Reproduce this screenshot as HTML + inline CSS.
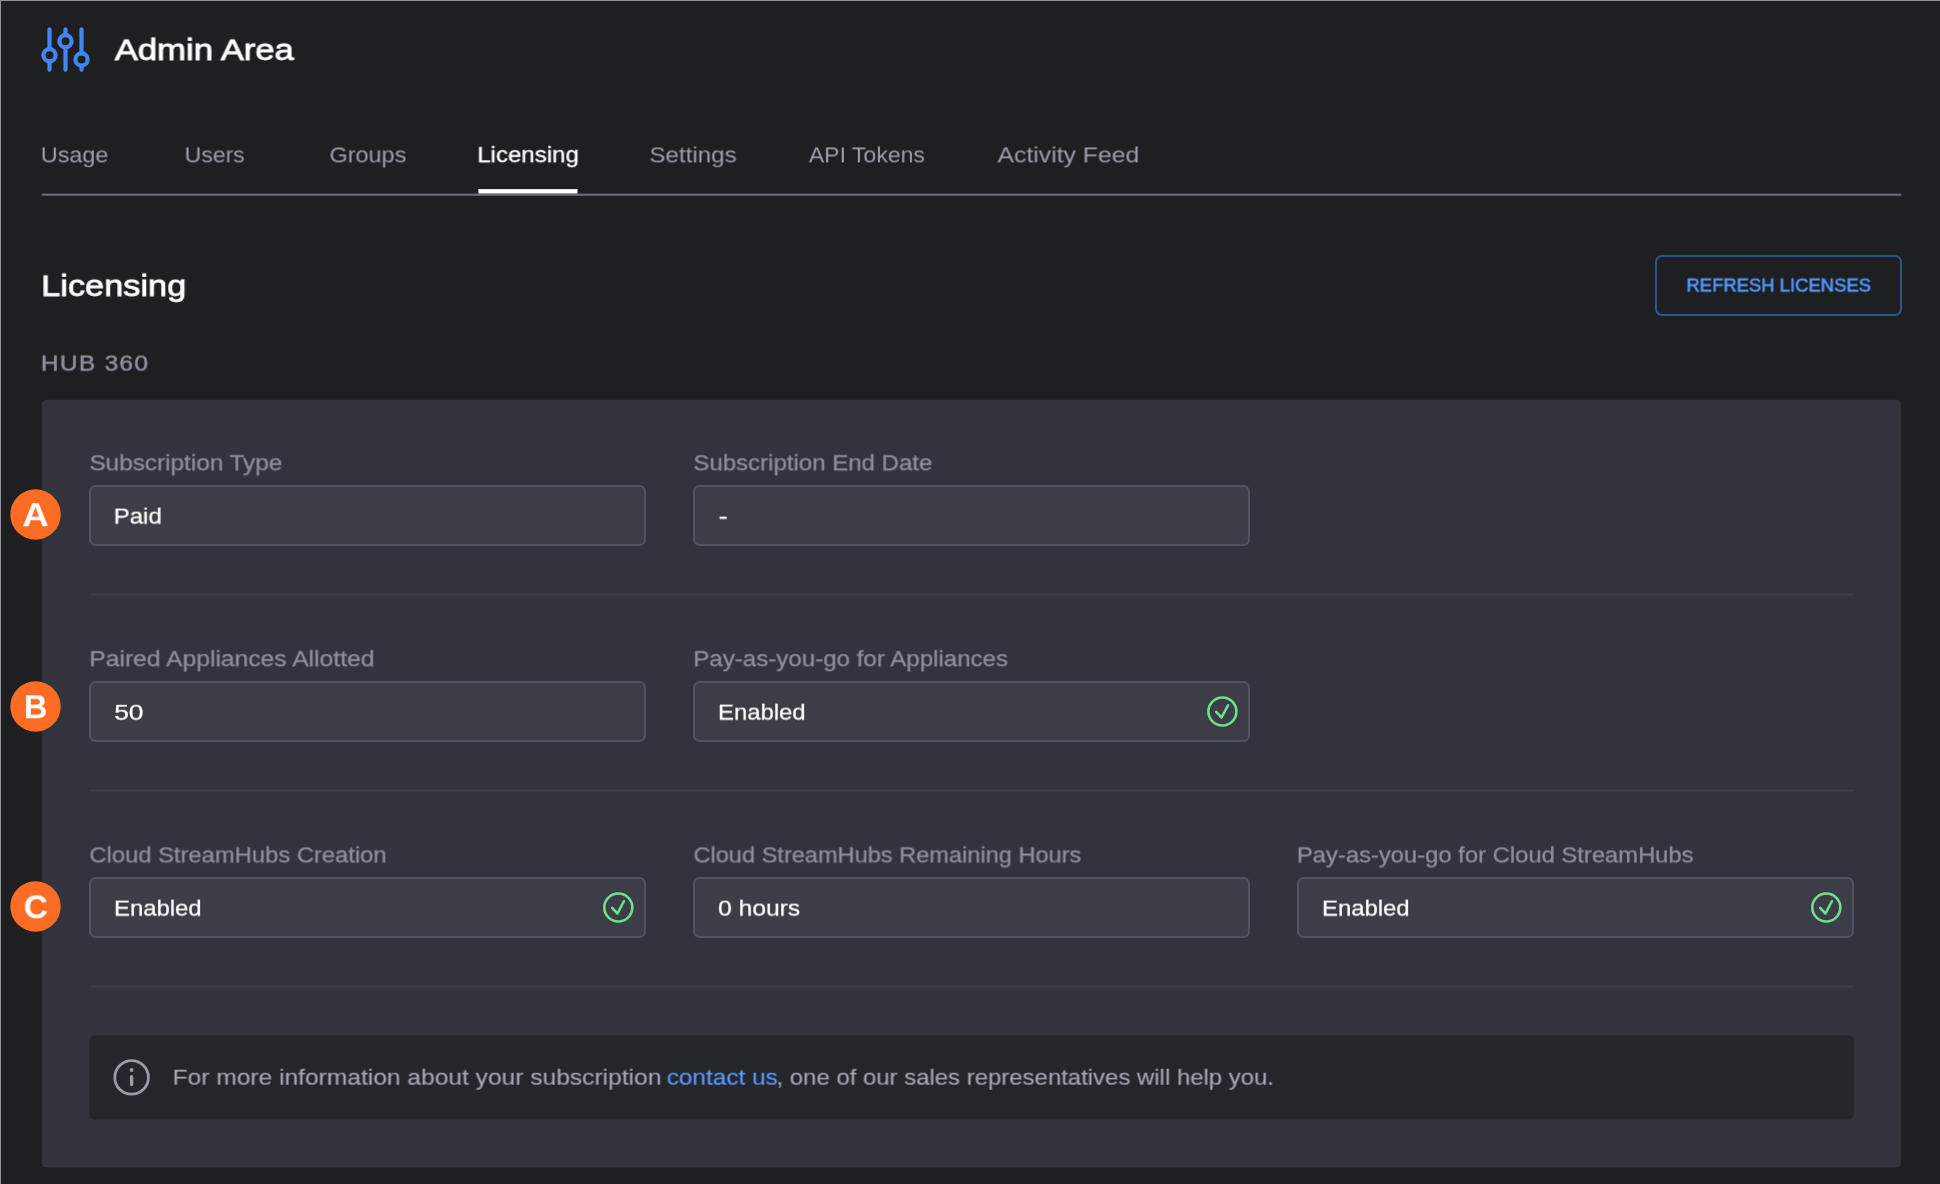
<!DOCTYPE html>
<html lang="en">
<head>
<meta charset="utf-8">
<title>Admin Area - Licensing</title>
<style>
html,body{margin:0;padding:0}
body{width:1940px;height:1184px;background:#1e1f21;position:relative;overflow:hidden;font-family:'Liberation Sans', sans-serif;}
.t{position:absolute;line-height:1;white-space:nowrap;transform-origin:0 0;display:block;text-decoration:none;font-weight:normal}
.t a{color:inherit;text-decoration:none}
p,h1,h2,h3,nav,header,main,section{margin:0;padding:0;font-weight:normal;font-size:inherit;display:block}
.abs{position:absolute}
.edge-t{left:0;top:0;width:1940px;height:1px;background:#929292}
.edge-l{left:0;top:0;width:1px;height:1184px;background:#929292}
.btn{left:1655px;top:255px;width:247px;height:61px;box-sizing:border-box;border:2px solid #2f558e;border-radius:7px;background:transparent;padding:0;margin:0;font:inherit;color:inherit;cursor:pointer;overflow:visible}
.inp{position:absolute;width:557px;height:61px;box-sizing:border-box;border:2px solid #525362;border-radius:6.5px;background:#3d3d48}
.chk{position:absolute}
</style>
</head>
<body>
<!-- background shapes: tab rule + active indicator, card, row dividers, info banner -->
<svg class="abs" style="left:0;top:0" width="1940" height="1184" viewBox="0 0 1940 1184" aria-hidden="true">
<rect x="41.8" y="193.6" width="1859.5" height="2.2" fill="#6a6a7c"/>
<rect x="478.4" y="189.1" width="99.1" height="4.4" fill="#ffffff"/>
<rect x="41.7" y="399.7" width="1859.5" height="767.9" rx="5" fill="#33333d"/>
<rect x="89.4" y="593.6" width="1764.1" height="1.9" fill="#3f3f4a"/>
<rect x="89.4" y="789.6" width="1764.1" height="1.9" fill="#3f3f4a"/>
<rect x="89.4" y="985.6" width="1764.1" height="1.9" fill="#3f3f4a"/>
<rect x="89.4" y="1035.6" width="1764.3" height="83.9" rx="5" fill="#25262b"/>
</svg>
<div class="abs edge-t"></div><div class="abs edge-l"></div>

<header>
<svg class="abs" style="left:36px;top:20px" width="60" height="60" viewBox="0 0 60 60" fill="none" stroke="#4287f0" stroke-width="4.2" stroke-linecap="round" aria-hidden="true">
<path d="M13.5 9.3V29.1M13.5 41.4V49.7"/><circle cx="13.5" cy="35.25" r="6.1"/>
<path d="M29.5 9.3V15.1M29.5 27.4V49.7"/><circle cx="29.5" cy="21.25" r="6.1"/>
<path d="M45.5 9.3V33.4M45.5 45.7V49.7"/><circle cx="45.5" cy="39.5" r="6.1"/>
</svg>
<h1 class="t" style="left:114px;top:34px;font-size:29.5px;color:#ffffff;-webkit-text-stroke:0.8px #ffffff;transform:perspective(100000px) translate3d(0.69px,0.84px,0.1px) scaleX(1.1752);">Admin Area</h1>
</header>

<nav>
<a class="t" href="#" style="left:40px;top:144px;font-size:22.5px;color:#9e9ead;transform:perspective(100000px) translate3d(0.75px,0.40px,0.1px) scaleX(1.0398);">Usage</a>
<a class="t" href="#" style="left:184px;top:144px;font-size:22.5px;color:#9e9ead;transform:perspective(100000px) translate3d(0.58px,0.40px,0.1px) scaleX(1.0235);">Users</a>
<a class="t" href="#" style="left:329px;top:144px;font-size:22.5px;color:#9e9ead;transform:perspective(100000px) translate3d(0.49px,0.40px,0.1px) scaleX(1.0418);">Groups</a>
<a class="t" href="#" style="left:477px;top:144px;font-size:22.5px;color:#ffffff;-webkit-text-stroke:0.3px #ffffff;transform:perspective(100000px) translate3d(0.27px,0.18px,0.1px) scaleX(1.0682);">Licensing</a>
<a class="t" href="#" style="left:649px;top:144px;font-size:22.5px;color:#9e9ead;transform:perspective(100000px) translate3d(0.39px,0.40px,0.1px) scaleX(1.0741);">Settings</a>
<a class="t" href="#" style="left:808px;top:144px;font-size:22.5px;color:#9e9ead;transform:perspective(100000px) translate3d(0.85px,0.40px,0.1px) scaleX(1.0236);">API Tokens</a>
<a class="t" href="#" style="left:997px;top:144px;font-size:22.5px;color:#9e9ead;transform:perspective(100000px) translate3d(0.44px,0.40px,0.1px) scaleX(1.1001);">Activity Feed</a>
</nav>

<main>
<h2 class="t" style="left:41px;top:270px;font-size:30px;color:#ffffff;-webkit-text-stroke:0.8px #ffffff;transform:perspective(100000px) translate3d(0.22px,0.84px,0.1px) scaleX(1.1439);">Licensing</h2>
<button type="button" class="abs btn"><span class="t" style="left:29px;top:18px;font-size:19px;color:#5599ff;-webkit-text-stroke:0.6px #5599ff;transform:perspective(100000px) translate3d(0.40px,0.53px,0.1px) scaleX(0.9713);">REFRESH LICENSES</span></button>
<h3 class="t" style="left:40px;top:352px;font-size:22.5px;color:#8f8f9f;-webkit-text-stroke:0.5px #8f8f9f;letter-spacing:1.2px;transform:perspective(100000px) translate3d(0.86px,0.58px,0.1px) scaleX(1.0877);">HUB 360</h3>

<section>
<label class="t" style="left:89px;top:453px;font-size:21.5px;color:#8e8e9c;-webkit-text-stroke:0.3px #8e8e9c;transform:perspective(100000px) translate3d(0.41px,0.29px,0.1px) scaleX(1.1316);">Subscription Type</label>
<div class="inp" style="left:89px;top:485px"><span class="t" style="left:22px;top:18px;font-size:22.5px;color:#ffffff;-webkit-text-stroke:0.25px #ffffff;transform:perspective(100000px) translate3d(0.72px,0.58px,0.1px) scaleX(1.0662);">Paid</span></div>
<label class="t" style="left:693px;top:453px;font-size:21.5px;color:#8e8e9c;-webkit-text-stroke:0.3px #8e8e9c;transform:perspective(100000px) translate3d(0.42px,0.29px,0.1px) scaleX(1.1168);">Subscription End Date</label>
<div class="inp" style="left:693px;top:485px"><span class="t" style="left:23px;top:18px;font-size:22.5px;color:#ffffff;-webkit-text-stroke:0.6px #ffffff;transform:perspective(100000px) translate3d(0.75px,0.58px,0.1px) scaleX(1.1431);">-</span></div>
</section>

<section>
<label class="t" style="left:89px;top:649px;font-size:21.5px;color:#8e8e9c;-webkit-text-stroke:0.3px #8e8e9c;transform:perspective(100000px) translate3d(0.27px,0.19px,0.1px) scaleX(1.1470);">Paired Appliances Allotted</label>
<div class="inp" style="left:89px;top:681px"><span class="t" style="left:23px;top:18px;font-size:22.5px;color:#ffffff;-webkit-text-stroke:0.25px #ffffff;transform:perspective(100000px) translate3d(0.12px,0.78px,0.1px) scaleX(1.1742);">50</span></div>
<label class="t" style="left:693px;top:649px;font-size:21.5px;color:#8e8e9c;-webkit-text-stroke:0.3px #8e8e9c;transform:perspective(100000px) translate3d(0.31px,0.19px,0.1px) scaleX(1.1209);">Pay-as-you-go for Appliances</label>
<div class="inp" style="left:693px;top:681px"><span class="t" style="left:23px;top:18px;font-size:22.5px;color:#ffffff;-webkit-text-stroke:0.25px #ffffff;transform:perspective(100000px) translate3d(0.03px,0.58px,0.1px) scaleX(1.0601);">Enabled</span><svg class="chk" style="left:509px;top:10px" width="38" height="38" viewBox="0 0 38 38" aria-hidden="true"><g transform="translate(0.40 0.45)" fill="none" stroke="#6ee08d" stroke-width="2.6" stroke-linecap="round" stroke-linejoin="round"><circle cx="18" cy="18" r="14"/><path d="M11.8 18.45 L17.15 24.05 L23.6 11.8"/></g></svg></div>
</section>

<section>
<label class="t" style="left:89px;top:845px;font-size:21.5px;color:#8e8e9c;-webkit-text-stroke:0.3px #8e8e9c;transform:perspective(100000px) translate3d(0.37px,0.39px,0.1px) scaleX(1.1056);">Cloud StreamHubs Creation</label>
<div class="inp" style="left:89px;top:877px"><span class="t" style="left:23px;top:18px;font-size:22.5px;color:#ffffff;-webkit-text-stroke:0.25px #ffffff;transform:perspective(100000px) translate3d(0.03px,0.58px,0.1px) scaleX(1.0601);">Enabled</span><svg class="chk" style="left:509px;top:10px" width="38" height="38" viewBox="0 0 38 38" aria-hidden="true"><g transform="translate(0.30 0.45)" fill="none" stroke="#6ee08d" stroke-width="2.6" stroke-linecap="round" stroke-linejoin="round"><circle cx="18" cy="18" r="14"/><path d="M11.8 18.45 L17.15 24.05 L23.6 11.8"/></g></svg></div>
<label class="t" style="left:693px;top:845px;font-size:21.5px;color:#8e8e9c;-webkit-text-stroke:0.3px #8e8e9c;transform:perspective(100000px) translate3d(0.48px,0.39px,0.1px) scaleX(1.0964);">Cloud StreamHubs Remaining Hours</label>
<div class="inp" style="left:693px;top:877px"><span class="t" style="left:23px;top:18px;font-size:22.5px;color:#ffffff;-webkit-text-stroke:0.25px #ffffff;transform:perspective(100000px) translate3d(0.19px,0.58px,0.1px) scaleX(1.0918);">0 hours</span></div>
<label class="t" style="left:1296px;top:845px;font-size:21.5px;color:#8e8e9c;-webkit-text-stroke:0.3px #8e8e9c;transform:perspective(100000px) translate3d(0.83px,0.39px,0.1px) scaleX(1.1066);">Pay-as-you-go for Cloud StreamHubs</label>
<div class="inp" style="left:1297px;top:877px"><span class="t" style="left:23px;top:18px;font-size:22.5px;color:#ffffff;-webkit-text-stroke:0.25px #ffffff;transform:perspective(100000px) translate3d(0.03px,0.58px,0.1px) scaleX(1.0601);">Enabled</span><svg class="chk" style="left:509px;top:10px" width="38" height="38" viewBox="0 0 38 38" aria-hidden="true"><g transform="translate(0.30 0.45)" fill="none" stroke="#6ee08d" stroke-width="2.6" stroke-linecap="round" stroke-linejoin="round"><circle cx="18" cy="18" r="14"/><path d="M11.8 18.45 L17.15 24.05 L23.6 11.8"/></g></svg></div>
</section>

<section>
<svg class="abs" style="left:110px;top:1055px" width="44" height="44" viewBox="0 0 44 44" aria-hidden="true"><circle cx="21.6" cy="22.4" r="16.8" fill="none" stroke="#9b9ba8" stroke-width="2.8"/><circle cx="21.6" cy="15" r="1.9" fill="#9b9ba8"/><path d="M21.6 21.7V29.5" stroke="#9b9ba8" stroke-width="3.4" stroke-linecap="round"/></svg>
<p><span class="t" style="left:172px;top:1067px;font-size:21.5px;color:#a5a5b5;-webkit-text-stroke:0.15px #a5a5b5;transform:perspective(100000px) translate3d(0.56px,0.71px,0.1px) scaleX(1.1426);">For more information about your subscription</span><span class="t" style="left:666px;top:1067px;font-size:21.5px;color:#5a9bff;-webkit-text-stroke:0.15px #5a9bff;transform:perspective(100000px) translate3d(0.65px,0.71px,0.1px) scaleX(1.1328);"><a href="#">contact us</a></span><span class="t" style="left:776px;top:1067px;font-size:21.5px;color:#a5a5b5;-webkit-text-stroke:0.15px #a5a5b5;transform:perspective(100000px) translate3d(0.47px,0.71px,0.1px) scaleX(1.1131);">, one of our sales representatives will help you.</span></p>
</section>
</main>

<!-- annotation callouts -->
<svg class="abs" style="left:0;top:480px" width="80" height="460" viewBox="0 0 80 460" aria-hidden="true"><circle cx="35.5" cy="34.5" r="25.2" fill="#fd6c25"/><circle cx="35.5" cy="226.5" r="25.2" fill="#fd6c25"/><circle cx="35.5" cy="426.5" r="25.2" fill="#fd6c25"/></svg>
<span class="t" style="left:22px;top:497px;font-size:34px;color:#ffffff;font-weight:bold;transform:perspective(100000px) translate3d(0.13px,0.20px,0.1px) scaleX(1.0882);">A</span><span class="t" style="left:23px;top:689px;font-size:34px;color:#ffffff;font-weight:bold;transform:perspective(100000px) translate3d(0.91px,0.25px,0.1px) scaleX(0.9559);">B</span><span class="t" style="left:23px;top:889px;font-size:34px;color:#ffffff;font-weight:bold;transform:perspective(100000px) translate3d(0.71px,0.25px,0.1px) scaleX(0.9843);">C</span>
</body>
</html>
